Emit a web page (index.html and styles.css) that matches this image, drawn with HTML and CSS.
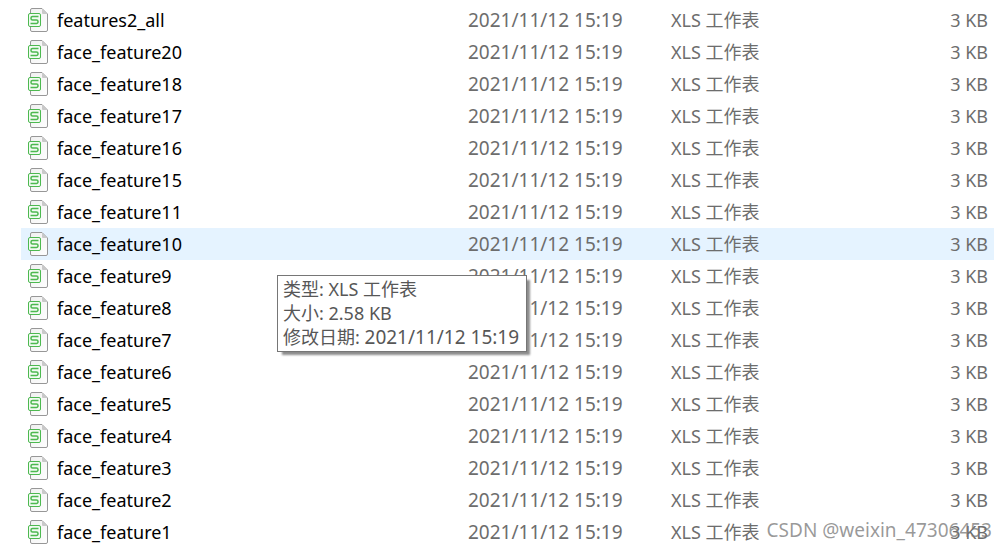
FILE: index.html
```html
<!DOCTYPE html>
<html lang="zh-CN">
<head>
<meta charset="utf-8">
<meta name="viewport" content="width=device-width, initial-scale=1">
<title>face_feature</title>
<link rel="stylesheet" href="styles.css">
</head>
<body>
<svg class="symbols" aria-hidden="true">
  <defs>
    <linearGradient id="paper" x1="0" y1="0" x2="1" y2="1">
      <stop offset="0" stop-color="#f0f0f0"/>
      <stop offset="1" stop-color="#fefefe"/>
    </linearGradient>
    <symbol id="sheet" viewBox="0 0 22 24">
      <path d="M5 .5h10l5.500 5.500V22a1.500 1.500 0 0 1-1.500 1.500H5A1.500 1.500 0 0 1 3.500 22V2A1.500 1.500 0 0 1 5 .5z" fill="url(#paper)" stroke="#979797"/>
      <path d="M15 1v4a1 1 0 0 0 1 1h4.500z" fill="#c9c9c9"/>
      <rect x="1.500" y="5.500" width="12" height="13" rx="1.500" fill="#f2fbf2" stroke="#4db950"/>
      <path d="M11.500 8.500H5.500a1.500 1.500 0 0 0-1.500 1.500v.5a1.500 1.500 0 0 0 1.500 1.500h4a1.500 1.500 0 0 1 1.500 1.500v.5a1.500 1.500 0 0 1-1.500 1.500H3.500" fill="none" stroke="#4db950" stroke-width="1.500"/>
    </symbol>
  </defs>
</svg>
<main class="explorer">
  <table class="files">
    <colgroup><col class="col-name"><col class="col-date"><col class="col-type"><col></colgroup>
    <tbody>
      <tr><td><span class="name"><svg class="icon"><use href="#sheet"/></svg>features2_all</span></td><td>2021/11/12 15:19</td><td class="type">XLS 工作表</td><td class="size">3 KB</td></tr>
      <tr><td><span class="name"><svg class="icon"><use href="#sheet"/></svg>face_feature20</span></td><td>2021/11/12 15:19</td><td class="type">XLS 工作表</td><td class="size">3 KB</td></tr>
      <tr><td><span class="name"><svg class="icon"><use href="#sheet"/></svg>face_feature18</span></td><td>2021/11/12 15:19</td><td class="type">XLS 工作表</td><td class="size">3 KB</td></tr>
      <tr><td><span class="name"><svg class="icon"><use href="#sheet"/></svg>face_feature17</span></td><td>2021/11/12 15:19</td><td class="type">XLS 工作表</td><td class="size">3 KB</td></tr>
      <tr><td><span class="name"><svg class="icon"><use href="#sheet"/></svg>face_feature16</span></td><td>2021/11/12 15:19</td><td class="type">XLS 工作表</td><td class="size">3 KB</td></tr>
      <tr><td><span class="name"><svg class="icon"><use href="#sheet"/></svg>face_feature15</span></td><td>2021/11/12 15:19</td><td class="type">XLS 工作表</td><td class="size">3 KB</td></tr>
      <tr><td><span class="name"><svg class="icon"><use href="#sheet"/></svg>face_feature11</span></td><td>2021/11/12 15:19</td><td class="type">XLS 工作表</td><td class="size">3 KB</td></tr>
      <tr class="hovered"><td><span class="name"><svg class="icon"><use href="#sheet"/></svg>face_feature10</span></td><td>2021/11/12 15:19</td><td class="type">XLS 工作表</td><td class="size">3 KB</td></tr>
      <tr><td><span class="name"><svg class="icon"><use href="#sheet"/></svg>face_feature9</span></td><td>2021/11/12 15:19</td><td class="type">XLS 工作表</td><td class="size">3 KB</td></tr>
      <tr><td><span class="name"><svg class="icon"><use href="#sheet"/></svg>face_feature8</span></td><td>2021/11/12 15:19</td><td class="type">XLS 工作表</td><td class="size">3 KB</td></tr>
      <tr><td><span class="name"><svg class="icon"><use href="#sheet"/></svg>face_feature7</span></td><td>2021/11/12 15:19</td><td class="type">XLS 工作表</td><td class="size">3 KB</td></tr>
      <tr><td><span class="name"><svg class="icon"><use href="#sheet"/></svg>face_feature6</span></td><td>2021/11/12 15:19</td><td class="type">XLS 工作表</td><td class="size">3 KB</td></tr>
      <tr><td><span class="name"><svg class="icon"><use href="#sheet"/></svg>face_feature5</span></td><td>2021/11/12 15:19</td><td class="type">XLS 工作表</td><td class="size">3 KB</td></tr>
      <tr><td><span class="name"><svg class="icon"><use href="#sheet"/></svg>face_feature4</span></td><td>2021/11/12 15:19</td><td class="type">XLS 工作表</td><td class="size">3 KB</td></tr>
      <tr><td><span class="name"><svg class="icon"><use href="#sheet"/></svg>face_feature3</span></td><td>2021/11/12 15:19</td><td class="type">XLS 工作表</td><td class="size">3 KB</td></tr>
      <tr><td><span class="name"><svg class="icon"><use href="#sheet"/></svg>face_feature2</span></td><td>2021/11/12 15:19</td><td class="type">XLS 工作表</td><td class="size">3 KB</td></tr>
      <tr><td><span class="name"><svg class="icon"><use href="#sheet"/></svg>face_feature1</span></td><td>2021/11/12 15:19</td><td class="type">XLS 工作表</td><td class="size">3 KB</td></tr>
    </tbody>
  </table>
  <div class="tooltip" role="tooltip">
    <div>类型: XLS 工作表</div>
    <div>大小: 2.58 KB</div>
    <div>修改日期: <span class="date">2021/11/12 15:19</span></div>
  </div>
  <div class="watermark">CSDN @weixin_47306453</div>
</main>
</body>
</html>
```
FILE: styles.css
```css
body {
  margin: 0;
  background: #fff;
  font-family: "Noto Sans", "Noto Sans CJK SC", sans-serif;
  font-size: 18px;
}
.symbols {
  position: absolute;
  width: 0;
  height: 0;
}
.explorer {
  position: relative;
  padding: 4px 12px 2px 21px;
}
.files {
  width: 100%;
  table-layout: fixed;
  border-collapse: collapse;
  color: #6d6d6d;
  line-height: 32px;
  white-space: nowrap;
}
.files td {
  height: 32px;
  padding: 0;
  font-size: 19px;
}
.col-name { width: 447px; }
.col-date { width: 203px; }
.col-type { width: 200px; }
.name {
  display: flex;
  align-items: center;
  gap: 8px;
  padding-left: 6px;
  color: #000;
  font-size: 18px;
}
.icon {
  width: 22px;
  height: 24px;
  flex: none;
}
.files .type,
.files .size { font-size: 18px; }
.files .size {
  padding-right: 6px;
  text-align: right;
}
.hovered { background: #e5f3ff; }
.tooltip {
  position: absolute;
  left: 277px;
  top: 275px;
  padding: 1px 7px 2px 5px;
  border: 1px solid #767676;
  background: #fff;
  box-shadow: 4px 4px 2px -1px rgba(0, 0, 0, 0.45);
  color: #575757;
  line-height: 24px;
  white-space: nowrap;
}
.tooltip .date { font-size: 19px; }
.watermark {
  position: absolute;
  right: 14px;
  bottom: 4px;
  color: rgba(120, 120, 120, 0.75);
  font-size: 19px;
  line-height: 32px;
}
```
